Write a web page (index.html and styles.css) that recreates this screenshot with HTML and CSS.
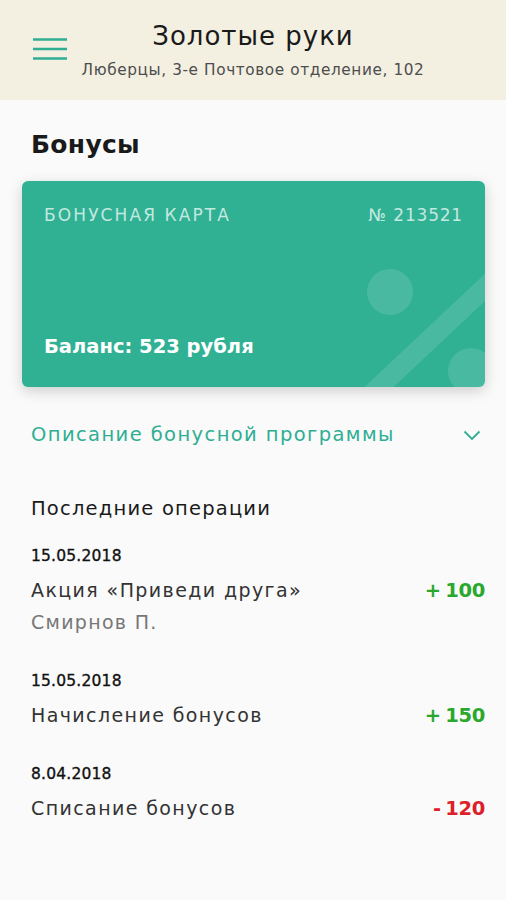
FILE: index.html
```html
<!DOCTYPE html>
<html lang="ru">
<head>
<meta charset="utf-8">
<title>Бонусы</title>
<link rel="stylesheet" href="styles.css">
</head>
<body>
<header class="header">
  <div class="menu-col">
    <svg class="menu-icon" width="34" height="24" viewBox="0 0 34 24">
      <path d="M0 2.5H34M0 12H34M0 21.5H34" stroke="#2fae93" stroke-width="2.6" fill="none"/>
    </svg>
  </div>
  <div class="title-block">
    <div class="title">Золотые руки</div>
    <div class="subtitle">Люберцы, 3-е Почтовое отделение, 102</div>
  </div>
  <div></div>
</header>
<main class="content">
  <h1 class="page-title">Бонусы</h1>
  <section class="card">
    <div class="card-top">
      <span class="card-label">БОНУСНАЯ КАРТА</span>
      <span class="card-number">№ 213521</span>
    </div>
    <div class="card-balance">Баланс: 523 рубля</div>
    <svg class="card-deco" width="130" height="130" viewBox="0 0 130 130">
      <circle cx="35" cy="35" r="23" fill="#ffffff" fill-opacity="0.12"/>
      <path d="M-10 162 L140 21" stroke="#ffffff" stroke-opacity="0.12" stroke-width="20" fill="none"/>
      <circle cx="116" cy="114" r="23" fill="#ffffff" fill-opacity="0.12"/>
    </svg>
  </section>
  <div class="program">
    <span>Описание бонусной программы</span>
    <svg class="chevron" width="18" height="11" viewBox="0 0 18 11">
      <path d="M1.5 1.5 L9 9 L16.5 1.5" stroke="#2fae93" stroke-width="1.8" fill="none"/>
    </svg>
  </div>
  <h2 class="ops-title">Последние операции</h2>
  <ul class="ops">
    <li class="op">
      <div class="op-date">15.05.2018</div>
      <div class="op-row">
        <div class="op-name">Акция «Приведи друга»</div>
        <div class="op-sum plus">+ 100</div>
      </div>
      <div class="op-sub">Смирнов П.</div>
    </li>
    <li class="op">
      <div class="op-date">15.05.2018</div>
      <div class="op-row">
        <div class="op-name">Начисление бонусов</div>
        <div class="op-sum plus">+ 150</div>
      </div>
    </li>
    <li class="op">
      <div class="op-date">8.04.2018</div>
      <div class="op-row">
        <div class="op-name">Списание бонусов</div>
        <div class="op-sum minus">- 120</div>
      </div>
    </li>
  </ul>
</main>
</body>
</html>
```
FILE: styles.css
```css
* { box-sizing: border-box; }
html, body { margin: 0; padding: 0; }
body {
  width: 506px;
  height: 900px;
  background: #fafafa;
  font-family: "DejaVu Sans", "Open Sans", sans-serif;
  color: #1e1e1e;
  overflow: hidden;
}
.header {
  height: 100px;
  background: #f3efe1;
  display: grid;
  grid-template-columns: 1fr auto 1fr;
  align-items: start;
}
.menu-col { padding: 37px 0 0 33px; }
.menu-icon { display: block; }
.title-block { text-align: center; padding-top: 20px; }
.title {
  font-size: 26px;
  font-weight: 400;
  color: #1a1a1a;
  line-height: 32px;
  letter-spacing: 1px;
}
.subtitle {
  font-size: 15.3px;
  color: #4d4d4d;
  line-height: 22px;
  margin-top: 7px;
  letter-spacing: 0.6px;
}
.content { padding: 0 21px 0 22px; }
.page-title {
  margin: 27px 0 0 9px;
  font-size: 25px;
  font-weight: 700;
  line-height: 36px;
  color: #1a1a1a;
  letter-spacing: 0.3px;
}
.card {
  position: relative;
  margin-top: 18px;
  height: 206px;
  background: #30b194;
  border-radius: 6px;
  box-shadow: 0 4px 14px rgba(0, 0, 0, 0.18);
  padding: 22px 22px 0 22px;
  display: flex;
  flex-direction: column;
  overflow: hidden;
}
.card-top {
  display: flex;
  justify-content: space-between;
  font-size: 17px;
  line-height: 24px;
  color: rgba(255, 255, 255, 0.72);
}
.card-label { letter-spacing: 2.1px; }
.card-number { letter-spacing: 0.8px; }
.card-balance {
  margin-top: auto;
  margin-bottom: 25px;
  font-size: 19.5px;
  font-weight: 700;
  line-height: 30px;
  color: #ffffff;
}
.card-deco {
  position: absolute;
  right: 0;
  bottom: 0;
}
.program {
  margin: 30px 4px 0 9px;
  display: flex;
  justify-content: space-between;
  align-items: center;
  color: #2fae93;
  font-size: 19.5px;
  font-weight: 400;
  line-height: 36px;
  letter-spacing: 1.4px;
}
.chevron { display: block; }
.ops-title {
  margin: 42px 0 0 9px;
  font-size: 19.5px;
  font-weight: 400;
  line-height: 28px;
  color: #1a1a1a;
  letter-spacing: 1.2px;
}
.ops { list-style: none; margin: 0; padding: 0 0 0 9px; }
.op { padding-top: 22px; }
.op + .op { padding-top: 34px; }
.op-date {
  font-size: 15.5px;
  font-weight: 400;
  line-height: 22px;
  color: #111111;
  letter-spacing: 0.2px;
  -webkit-text-stroke: 0.35px #111111;
}
.op-row {
  display: flex;
  justify-content: space-between;
  align-items: baseline;
  margin-top: 10px;
}
.op-name {
  font-size: 19px;
  line-height: 26px;
  color: #333333;
  letter-spacing: 1.4px;
}
.op-sum {
  font-size: 19.5px;
  font-weight: 700;
  line-height: 26px;
  letter-spacing: -0.3px;
  word-spacing: -2px;
}
.plus { color: #2aa82e; }
.minus { color: #dc1f2a; }
.op-sub {
  margin-top: 4px;
  font-size: 19px;
  line-height: 28px;
  color: #777777;
  letter-spacing: 1.3px;
}
```
